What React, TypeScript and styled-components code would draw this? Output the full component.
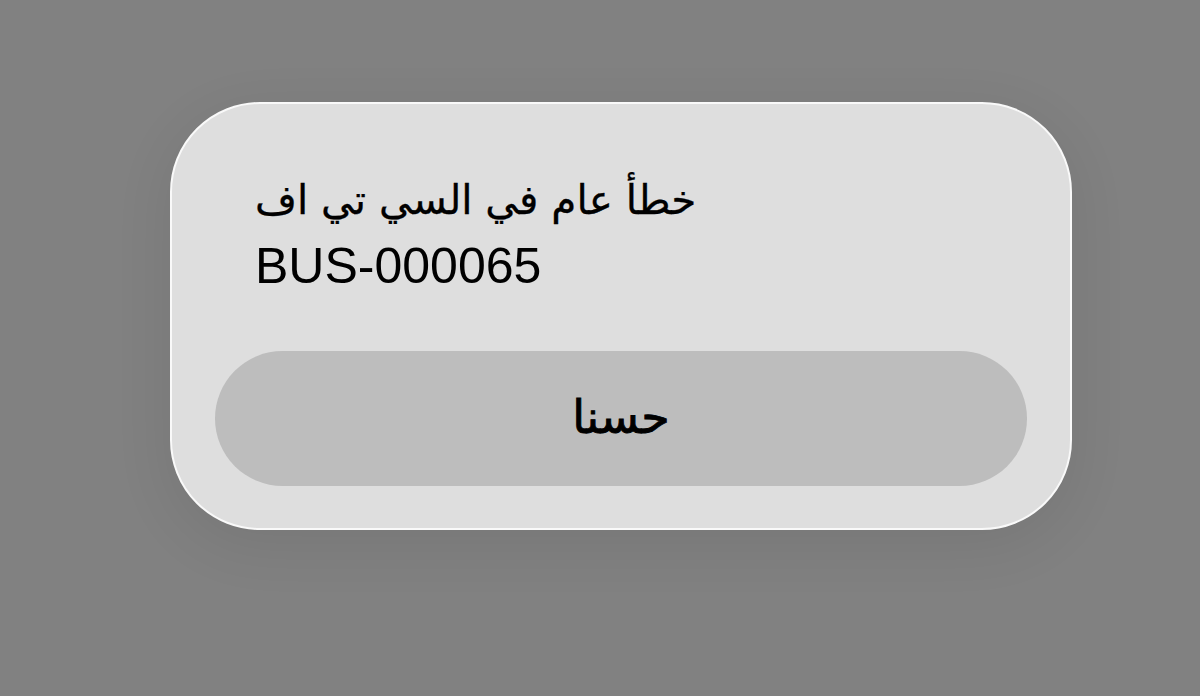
import React from "react";
import styled, { createGlobalStyle } from "styled-components";

const GlobalStyle = createGlobalStyle`
  html, body {
    margin: 0;
    padding: 0;
    background: #818181;
  }
  body {
    width: 1200px;
    height: 696px;
    overflow: hidden;
    font-family: "Liberation Sans", "DejaVu Sans", sans-serif;
  }
`;

const Backdrop = styled.div`
  width: 1200px;
  height: 696px;
  box-sizing: border-box;
  padding: 102px 0 0 170px;
  background: #818181;
`;

const AlertCard = styled.div`
  width: 902px;
  height: 428px;
  box-sizing: border-box;
  display: flex;
  flex-direction: column;
  padding: 60px 43px 42px 43px;
  background: #dedede;
  border: 2px solid #f9f9f9;
  border-radius: 90px;
  box-shadow: 0 14px 60px rgba(0, 0, 0, 0.08);
`;

const Message = styled.div`
  padding: 0 40px;
  color: #000;
  font-size: 50px;
  line-height: 68px;
`;

const ArabicLine = styled.div`
  font-family: "DejaVu Sans", sans-serif;
  font-size: 40.5px;
  white-space: nowrap;
  text-align: left;
  padding-top: 2px;
  -webkit-text-stroke: 0.3px #000;
`;

const CodeLine = styled.div`
  font-family: "Liberation Sans", Arial, sans-serif;
  white-space: nowrap;
  margin-top: -2px;
`;

const ActionButton = styled.button`
  margin-top: auto;
  height: 135px;
  width: 100%;
  border: none;
  border-radius: 68px;
  background: #bdbdbd;
  color: #000;
  font-family: "DejaVu Sans", sans-serif;
  font-size: 46px;
  font-weight: 400;
  -webkit-text-stroke: 0.9px #000;
  display: flex;
  align-items: center;
  justify-content: center;
  padding: 0 0 4px 0;
  cursor: pointer;
`;

export default function App() {
  return (
    <>
      <GlobalStyle />
      <Backdrop>
        <AlertCard role="alertdialog">
          <Message>
            <ArabicLine dir="rtl">خطأ عام في السي تي اف</ArabicLine>
            <CodeLine>BUS-000065</CodeLine>
          </Message>
          <ActionButton>حسنا</ActionButton>
        </AlertCard>
      </Backdrop>
    </>
  );
}
